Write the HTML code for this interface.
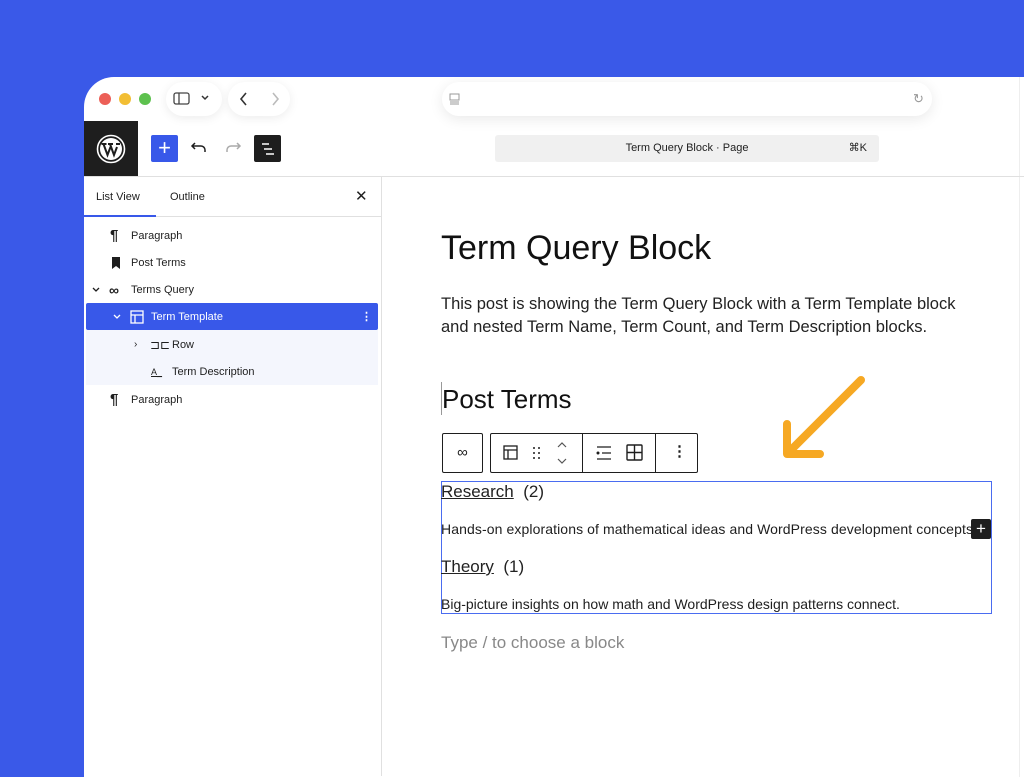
<!DOCTYPE html>
<html><head><meta charset="utf-8"><style>
*{box-sizing:border-box;margin:0;padding:0}
body{width:1024px;height:734px;overflow:hidden;background:#3a59e8;font-family:"Liberation Sans",sans-serif;position:relative;color:#1e1e1e}
.win{position:absolute;left:84px;top:77px;width:960px;height:700px;background:#fff;border-top-left-radius:30px;overflow:hidden}
.abs{position:absolute}
.dot{position:absolute;width:12px;height:12px;border-radius:50%;top:16px}
.pill{position:absolute;background:#fff;border-radius:18px;box-shadow:0 2px 10px rgba(0,0,0,.08)}
.row{position:absolute;left:0;width:297px;height:27px;font-size:11px;display:flex;align-items:center}
.c{font-size:17px;color:#222}
</style></head><body>
<div class="win">
 <div class="dot" style="left:15px;background:#ec5f57"></div>
 <div class="dot" style="left:35px;background:#f2be34"></div>
 <div class="dot" style="left:55px;background:#5dc14e"></div>
 <div class="pill" style="left:82px;top:5px;width:56px;height:34px"></div>
 <svg class="abs" style="left:89px;top:14px" width="18" height="16"><rect x="1" y="2" width="15" height="11" rx="2" fill="none" stroke="#444" stroke-width="1.3"/><line x1="6" y1="2" x2="6" y2="13" stroke="#444" stroke-width="1.3"/></svg>
 <svg class="abs" style="left:116px;top:17px" width="10" height="8"><path d="M2 2l3 3 3-3" fill="none" stroke="#333" stroke-width="1.5"/></svg>
 <div class="pill" style="left:144px;top:5px;width:62px;height:34px"></div>
 <svg class="abs" style="left:154px;top:14px" width="12" height="16"><path d="M8 2L3 8l5 6" fill="none" stroke="#333" stroke-width="1.6"/></svg>
 <svg class="abs" style="left:185px;top:14px" width="12" height="16"><path d="M4 2l5 6-5 6" fill="none" stroke="#bbb" stroke-width="1.6"/></svg>
 <div class="pill" style="left:358px;top:5px;width:490px;height:34px;box-shadow:0 3px 14px rgba(0,0,0,.09)"></div>
 <svg class="abs" style="left:365px;top:16px" width="12" height="14"><rect x="1" y="1" width="9" height="6" fill="none" stroke="#999"/><line x1="1" y1="9" x2="10" y2="9" stroke="#999"/><line x1="1" y1="11" x2="10" y2="11" stroke="#999"/></svg>
 <div class="abs" style="left:829px;top:14px;color:#999;font-size:13px">↻</div>
 <div class="abs" style="left:935px;top:0;width:1px;height:700px;background:#eee"></div>
 <!-- toolbar -->
 <div class="abs" style="left:0;top:44px;width:54px;height:55px;background:#1e1e1e"></div>
 <svg class="abs" style="left:12px;top:57px" width="30" height="30" viewBox="0 0 30 30"><circle cx="15" cy="15" r="13.5" fill="none" stroke="#fff" stroke-width="1.6"/><circle cx="15" cy="15" r="11" fill="#fff"/><path d="M5.5 10h5M7.5 10l4 11 3-8M12 10h5M14 10l4 11 3-8M20 10h4" stroke="#1e1e1e" stroke-width="2" fill="none"/></svg>
 <div class="abs" style="left:67px;top:58px;width:27px;height:27px;background:#3858e9;border-radius:2px;color:#fff;font-size:22px;line-height:26px;text-align:center">+</div>
 <svg class="abs" style="left:106px;top:63px" width="18" height="16"><path d="M5 3L2 6l3 3M2 6h9a4 4 0 014 4v2" fill="none" stroke="#1e1e1e" stroke-width="1.5"/></svg>
 <svg class="abs" style="left:140px;top:63px" width="18" height="16"><path d="M13 3l3 3-3 3M16 6H7a4 4 0 00-4 4v2" fill="none" stroke="#aaa" stroke-width="1.5"/></svg>
 <div class="abs" style="left:170px;top:58px;width:27px;height:27px;background:#1e1e1e;border-radius:2px"></div>
 <svg class="abs" style="left:174px;top:62px" width="20" height="20"><path d="M4 5h7M6 10h8M8 15h8" stroke="#fff" stroke-width="1.5"/></svg>
 <div class="abs" style="left:411px;top:58px;width:384px;height:27px;background:#f0f0f0;border-radius:3px;font-size:11px;line-height:27px;text-align:center;color:#1e1e1e">Term Query Block · Page<span style="position:absolute;right:12px">⌘K</span></div>
 <div class="abs" style="left:0;top:99px;width:960px;height:1px;background:#e0e0e0"></div>
 <!-- sidebar -->
 <div class="abs" style="left:297px;top:99px;width:1px;height:600px;background:#e0e0e0"></div>
 <div class="abs" style="left:12px;top:114px;font-size:11px">List View</div>
 <div class="abs" style="left:86px;top:114px;font-size:11px">Outline</div>
 <div class="abs" style="left:271px;top:110px;font-size:15px">✕</div>
 <div class="abs" style="left:0;top:138px;width:72px;height:2px;background:#3858e9"></div>
 <div class="abs" style="left:72px;top:139px;width:225px;height:1px;background:#e0e0e0"></div>
 <div class="row" style="top:145px"><span style="position:absolute;left:26px;font-size:15px;font-weight:bold">¶</span><span style="position:absolute;left:47px">Paragraph</span></div>
 <div class="row" style="top:172px"><svg style="position:absolute;left:27px" width="10" height="12"><path d="M1 0h8v12L5 9 1 12z" fill="#1e1e1e"/></svg><span style="position:absolute;left:47px">Post Terms</span></div>
 <div class="row" style="top:199px"><svg style="position:absolute;left:8px" width="8" height="6"><path d="M1 1l3 3 3-3" fill="none" stroke="#1e1e1e" stroke-width="1.3"/></svg><span style="position:absolute;left:25px;font-size:14px;font-weight:bold">∞</span><span style="position:absolute;left:47px">Terms Query</span></div>
 <div class="row" style="top:226px;left:2px;width:292px;background:#3858e9;color:#fff;border-radius:2px"><svg style="position:absolute;left:27px" width="8" height="6"><path d="M1 1l3 3 3-3" fill="none" stroke="#fff" stroke-width="1.3"/></svg><svg style="position:absolute;left:44px" width="14" height="14"><rect x="1" y="1" width="12" height="12" fill="none" stroke="#fff" stroke-width="1.3"/><path d="M1 5h12M5 5v8" stroke="#fff" stroke-width="1.3"/></svg><span style="position:absolute;left:65px">Term Template</span><span style="position:absolute;left:275px;font-weight:bold">⋮</span></div>
 <div class="row" style="top:253px;left:2px;width:292px;height:55px;background:#f4f6fd"></div>
 <div class="row" style="top:254px"><span style="position:absolute;left:50px;font-size:10px">›</span><span style="position:absolute;left:66px;font-size:12px">⊐⊏</span><span style="position:absolute;left:88px">Row</span></div>
 <div class="row" style="top:281px"><span style="position:absolute;left:67px;font-size:9px;text-decoration:underline">A_</span><span style="position:absolute;left:88px">Term Description</span></div>
 <div class="row" style="top:309px"><span style="position:absolute;left:26px;font-size:15px;font-weight:bold">¶</span><span style="position:absolute;left:47px">Paragraph</span></div>
 <!-- editor -->
 <div class="abs" style="left:357px;top:152px;font-size:34px;color:#111">Term Query Block</div>
 <div class="abs c" style="left:357px;top:216px;width:540px;line-height:23px;font-size:16.5px">This post is showing the Term Query Block with a Term Template block and nested Term Name, Term Count, and Term Description blocks.</div>
 <div class="abs" style="left:357px;top:305px;width:1px;height:33px;background:#999"></div>
 <div class="abs" style="left:358px;top:307px;font-size:26px;color:#111">Post Terms</div>
 <div class="abs" style="left:358px;top:356px;width:41px;height:40px;border:1px solid #1e1e1e;border-radius:2px;text-align:center;line-height:38px;font-size:15px">∞</div>
 <div class="abs" style="left:406px;top:356px;width:208px;height:40px;border:1px solid #1e1e1e;border-radius:2px"></div>
 <div class="abs" style="left:498px;top:356px;width:1px;height:40px;background:#1e1e1e"></div>
 <div class="abs" style="left:571px;top:356px;width:1px;height:40px;background:#1e1e1e"></div>
 <svg class="abs" style="left:419px;top:368px" width="16" height="16"><rect x="1" y="1" width="13" height="13" fill="none" stroke="#1e1e1e" stroke-width="1.3"/><path d="M1 5h13M5 5v9" stroke="#1e1e1e" stroke-width="1.3"/></svg>
 <svg class="abs" style="left:448px;top:368px" width="10" height="16" fill="#1e1e1e"><circle cx="2" cy="3" r="1"/><circle cx="7" cy="3" r="1"/><circle cx="2" cy="8" r="1"/><circle cx="7" cy="8" r="1"/><circle cx="2" cy="13" r="1"/><circle cx="7" cy="13" r="1"/></svg>
 <svg class="abs" style="left:472px;top:364px" width="12" height="24"><path d="M2 6l4-4 4 4M2 18l4 4 4-4" fill="none" stroke="#555" stroke-width="1.2"/></svg>
 <svg class="abs" style="left:511px;top:368px" width="18" height="16"><circle cx="3" cy="8" r="1.5" fill="#1e1e1e"/><path d="M2 2h14M7 8h9M2 14h14" stroke="#1e1e1e" stroke-width="1.3"/></svg>
 <svg class="abs" style="left:542px;top:367px" width="17" height="17"><rect x="1" y="1" width="15" height="15" rx="1" fill="none" stroke="#1e1e1e" stroke-width="1.4"/><path d="M8.5 1v15M1 8.5h15" stroke="#1e1e1e" stroke-width="1.4"/></svg>
 <div class="abs" style="left:588px;top:365px;font-size:15px;font-weight:bold">⋮</div>
 <div class="abs" style="left:357px;top:404px;width:551px;height:133px;border:1.5px solid #4a6cf0"></div>
 <div class="abs c" style="left:357px;top:405px"><u>Research</u>&nbsp; (2)</div>
 <div class="abs" style="left:357px;top:444px;font-size:14px;white-space:nowrap;width:530px;overflow:hidden;letter-spacing:0.1px">Hands-on explorations of mathematical ideas and WordPress development concepts</div>
 <div class="abs" style="left:887px;top:442px;width:20px;height:20px;background:#1e1e1e;color:#fff;text-align:center;line-height:19px;font-size:17px;border-radius:2px">+</div>
 <div class="abs c" style="left:357px;top:480px"><u>Theory</u>&nbsp; (1)</div>
 <div class="abs" style="left:357px;top:519px;font-size:14px">Big-picture insights on how math and WordPress design patterns connect.</div>
 <div class="abs" style="left:357px;top:556px;font-size:17px;color:#888">Type / to choose a block</div>
 <svg class="abs" style="left:680px;top:290px" width="110" height="110"><path d="M97 13L23 87M23 87V57M23 87h33" fill="none" stroke="#f6a823" stroke-width="8" stroke-linecap="round" stroke-linejoin="round"/></svg>
</div>
</body></html>
